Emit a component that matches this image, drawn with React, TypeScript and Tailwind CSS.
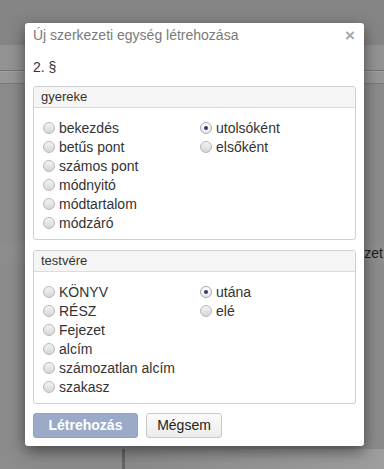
import React from "react";

const Radio = ({ checked }: { checked?: boolean }) =>
  checked ? (
    <span className="w-[12px] h-[12px] rounded-full border border-[#a8a8a8] bg-gradient-to-b from-[#ffffff] to-[#e8e8e8] flex items-center justify-center shrink-0">
      <span className="w-[4px] h-[4px] rounded-full bg-[#2e3f72]" />
    </span>
  ) : (
    <span className="w-[12px] h-[12px] rounded-full border border-[#b8b8b8] bg-gradient-to-b from-[#f4f4f4] to-[#d6d6d6] shrink-0" />
  );

const Item = ({ label, checked }: { label: string; checked?: boolean }) => (
  <div className="h-[19px] flex items-center gap-[4px]">
    <Radio checked={checked} />
    <span className="text-[14px] text-[#333] leading-none">{label}</span>
  </div>
);

const Panel = ({
  title,
  left,
  right,
  checkedRight,
}: {
  title: string;
  left: string[];
  right: string[];
  checkedRight: number;
}) => (
  <div className="border border-[#cfcfcf] rounded-[3px] bg-white">
    <div className="h-[21px] bg-[#f5f5f5] border-b border-[#dcdcdc] flex items-center px-[7px] text-[13px] text-[#333] rounded-t-[3px]">
      {title}
    </div>
    <div className="flex pt-[10px] pb-[7px] pl-[9px]">
      <div className="w-[157px] flex flex-col">
        {left.map((l) => (
          <Item key={l} label={l} />
        ))}
      </div>
      <div className="flex flex-col">
        {right.map((r, i) => (
          <Item key={r} label={r} checked={i === checkedRight} />
        ))}
      </div>
    </div>
  </div>
);

export default function App() {
  return (
    <div
      className="relative w-[384px] h-[469px] overflow-hidden bg-[#8a8a8a]"
      style={{ fontFamily: '"Liberation Sans", Arial, sans-serif' }}
    >
      {/* dimmed page behind */}
      <div className="flex flex-col">
        <div className="h-[45px] bg-[#858585]" />
        <div className="h-[25px] bg-[#939393]" />
        <div className="h-[1px] bg-[#747474]" />
        <div className="h-[1px] bg-[#a0a0a0]" />
        <div className="h-[11px] bg-[#969696]" />
        <div className="h-[1px] bg-[#7a7a7a]" />
        <div className="h-[159px] bg-[#8b8b8b]" />
        <div className="h-[20px] bg-[#8d8d8d] flex items-center">
          <span className="ml-[337px] whitespace-nowrap text-[14px] text-[#1e1e1e]">Fejezet</span>
        </div>
        <div className="h-[186px] bg-[#8b8b8b]" />
        <div className="flex h-[30px]">
          <div className="w-[122px] bg-[#8c8c8c]" />
          <div className="w-[3px] bg-[#666]" />
          <div className="flex-1 bg-gradient-to-r from-[#8a8a8a] to-[#9e9e9e]" />
        </div>
      </div>

      {/* dialog */}
      <div className="absolute left-[25px] top-[23px] w-[339px] h-[423px] bg-white rounded-[3px] shadow-[0_5px_15px_rgba(0,0,0,0.5)] px-[8px] flex flex-col">
        <div className="h-[24px] flex items-center justify-between">
          <span className="text-[14px] text-[#7a7a7a]">Új szerkezeti egység létrehozása</span>
          <span className="text-[17px] font-bold text-[#a5a5a5] leading-none mr-[1px]">×</span>
        </div>
        <div className="mt-[10px] h-[20px] flex items-center text-[14px] text-[#333]">2. §</div>
        <div className="mt-[9px]">
          <Panel
            title="gyereke"
            left={["bekezdés", "betűs pont", "számos pont", "módnyitó", "módtartalom", "módzáró"]}
            right={["utolsóként", "elsőként"]}
            checkedRight={0}
          />
        </div>
        <div className="mt-[10px]">
          <Panel
            title="testvére"
            left={["KÖNYV", "RÉSZ", "Fejezet", "alcím", "számozatlan alcím", "szakasz"]}
            right={["utána", "elé"]}
            checkedRight={0}
          />
        </div>
        <div className="mt-[9px] flex gap-[8px]">
          <button className="w-[105px] h-[25px] rounded-[3px] bg-[#9baac8] border border-[#93a2c2] text-white font-bold text-[14px]">
            Létrehozás
          </button>
          <button className="w-[76px] h-[25px] rounded-[3px] bg-gradient-to-b from-[#fbfbfb] to-[#ececec] border border-[#c8c8c8] text-[#222] text-[14px]">
            Mégsem
          </button>
        </div>
      </div>
    </div>
  );
}
